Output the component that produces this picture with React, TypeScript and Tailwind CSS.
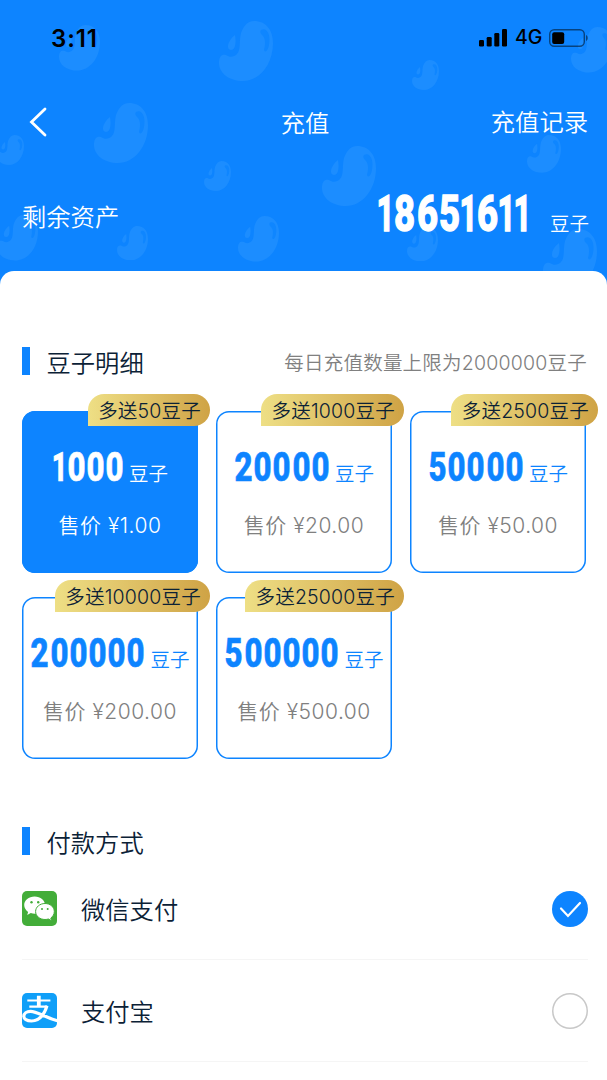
import { useState } from "react";
import clsx from "clsx";

type Pack = {
  id: number;
  amount: string;
  bonus: string;
  price: string;
};

const packs: Pack[] = [
  { id: 1, amount: "1000", bonus: "多送50豆子", price: "1.00" },
  { id: 2, amount: "20000", bonus: "多送1000豆子", price: "20.00" },
  { id: 3, amount: "50000", bonus: "多送2500豆子", price: "50.00" },
  { id: 4, amount: "200000", bonus: "多送10000豆子", price: "200.00" },
  { id: 5, amount: "500000", bonus: "多送25000豆子", price: "500.00" },
];

// x, y, width of every bean scattered over the header
const beans = [
  [59, 25, 41],
  [219, 21, 54],
  [94, 103, 54],
  [-3, 135, 27],
  [204, 161, 27],
  [412, 60, 27],
  [571, 27, 41],
  [322, 146, 54],
  [527, 135, 34],
  [-3, 215, 41],
  [117, 226, 31],
  [238, 216, 41],
  [407, 227, 31],
  [543, 229, 54],
];

const Bean = ({ x, y, w }: { x: number; y: number; w: number }) => (
  <svg
    className="absolute"
    style={{ left: x, top: y, width: w, height: (w * 60) / 54 }}
    viewBox="0 0 54 60"
  >
    <path
      fill="#1c8dff"
      d="M35 0C47 0 54 9 54 22C54 44 40 60 24 60C10 60 0 52 0 42C0 35 3 33 7 34C11 37 15 36 18 33C22 29 20 20 22 12C25 4 29 0 35 0Z"
    />
    <path fill="#1c8dff" d="M16 14C17 20 17 29 12 29C7 29 8 20 16 14Z" />
    <path fill="#0f86ff" d="M42 9C48 6 52 14 50 24C49 30 46 32 45 29C47 22 46 16 43 14C41 12 41 10 42 9Z" />
  </svg>
);

const StatusBar = () => (
  <div className="flex h-[76px] items-center justify-between pl-[51px] pr-[18px] text-black">
    <span className="mt-0.5 text-[24px] font-semibold leading-none tracking-[0.9px]">3:11</span>
    <div className="flex items-center">
      <svg className="h-[18px] w-[28px]" viewBox="0 0 28 18">
        <rect x="0" y="11" width="5" height="6.5" rx="1.3" />
        <rect x="7.7" y="8" width="5" height="9.5" rx="1.3" />
        <rect x="15.3" y="4" width="5" height="13.5" rx="1.3" />
        <rect x="23" y="0" width="5" height="17.5" rx="1.3" />
      </svg>
      <span className="ml-[8px] w-[27px] text-[19.5px] font-[450] leading-none">4G</span>
      <svg className="ml-[7px] h-[18px] w-[40px]" viewBox="0 0 40 18">
        <rect x="0.7" y="0.7" width="34.6" height="16.6" rx="4.5" fill="none" stroke="#000" strokeOpacity="0.5" strokeWidth="1.4" />
        <rect x="3.2" y="3.2" width="12" height="11.8" rx="2" />
        <path d="M37 6C39.3 7 39.3 11 37 12Z" opacity="0.5" />
      </svg>
    </div>
  </div>
);

const SectionTitle = ({ children }: { children: string }) => (
  <div className="flex h-7 items-center">
    <span className="h-7 w-2 bg-[#0d84ff]" />
    <h2 className="ml-[16.5px] pt-[3px] text-[24.3px] font-[350] leading-7 text-[#0b2136]">{children}</h2>
  </div>
);

// narrow bold digits, each squeezed into its own cell
const Condensed = ({ text, size }: { text: string; size: "card" | "total" }) => (
  <span className="flex items-baseline font-['Roboto'] font-extrabold leading-none">
    {text.split("").map((digit, i) => (
      <span
        key={i}
        className={clsx(
          "flex justify-center",
          size === "card" ? "text-[40px] [-webkit-text-stroke:0.7px_currentColor]" : "text-[50px] [-webkit-text-stroke:1.3px_currentColor]",
          size === "card" && (digit === "1" ? "w-[14.5px]" : "w-[19.2px]"),
          size === "total" && (digit === "1" ? "w-[16.2px]" : "w-[22.2px]")
        )}
      >
        <span
          className={clsx(
            "inline-block",
            digit !== "1" && (size === "card" ? "scale-x-[0.78]" : "scale-x-[0.73]"),
            digit === "1" && (size === "card" ? "scale-x-[0.68]" : "scale-x-[0.62]")
          )}
        >
          {digit}
        </span>
      </span>
    ))}
  </span>
);

const PackCard = ({ pack, active, onClick }: { pack: Pack; active: boolean; onClick: () => void }) => (
  <button
    onClick={onClick}
    className={clsx(
      "relative flex h-[162px] w-[176px] flex-col items-center rounded-[13px] shadow-[inset_0_0_0_1.5px_#0d84ff]",
      active ? "bg-[#0d84ff] text-white" : "bg-white text-[#0d84ff]"
    )}
  >
    <span className="absolute -right-[11.5px] -top-[17px] flex h-[32px] items-center whitespace-nowrap rounded-[16px] rounded-bl-none bg-linear-to-r from-[#eedf85] to-[#cfa345] pl-[10.5px] pr-[8.5px] pt-[3px] text-[19.5px] font-[350] tracking-[0.2px] text-[#0b2136]">
      {pack.bonus}
    </span>
    <span className="mt-[37px] flex h-[42px] items-baseline justify-center">
      <Condensed text={pack.amount} size="card" />
      <span className="ml-[5px] text-[19.5px] font-[350] leading-none">豆子</span>
    </span>
    <span
      className={clsx(
        "mt-[23px] whitespace-nowrap text-[21px] font-[350] leading-[26px] tracking-[0.5px]",
        active ? "text-white" : "text-[#808080]"
      )}
    >
      售价 ¥{pack.price}
    </span>
  </button>
);

const WechatIcon = () => (
  <svg className="size-[35px]" viewBox="0 0 35 35">
    <rect width="35" height="35" rx="5" fill="#43ad39" />
    <path
      fill="#fff"
      d="M12.6 5.5C6.7 5.5 2.2 9.3 2.2 14.1C2.2 16.9 3.7 19.3 6.1 20.9L5.2 24L8.8 22.1C10 22.5 11.4 22.7 12.6 22.7C18.5 22.7 23 18.9 23 14.1C23 9.3 18.5 5.5 12.6 5.5Z"
    />
    <path
      fill="#fff"
      stroke="#43ad39"
      strokeWidth="1"
      d="M23 12.5C17.8 12.5 13.6 16 13.6 20.5C13.6 25 17.8 28.5 23 28.5C24.2 28.5 25.4 28.3 26.4 28L29.7 29.8L28.8 27C31 25.5 32.3 23.1 32.3 20.5C32.3 16 28.2 12.5 23 12.5Z"
    />
    <g fill="#43ad39">
      <circle cx="9.5" cy="11.2" r="1.2" />
      <circle cx="16.2" cy="11.2" r="1.2" />
      <circle cx="20" cy="18" r="1" />
      <circle cx="25.7" cy="18" r="1" />
    </g>
  </svg>
);

const AlipayIcon = () => (
  <svg className="size-[35px]" viewBox="0 0 35 35">
    <clipPath id="alipay">
      <rect width="35" height="35" rx="5" />
    </clipPath>
    <g clipPath="url(#alipay)" fill="none" stroke="#fff">
      <rect width="35" height="35" fill="#109ff8" stroke="none" />
      <path strokeWidth="3.8" d="M16.8 2.7V13" />
      <path strokeWidth="2" d="M5.3 7.6H28.4" />
      <path strokeWidth="2.2" d="M7.3 13.6H25.2" />
      <path strokeWidth="3.2" d="M25 12.7C23 19.2 18.5 27.8 9.5 28C4.7 28 1.8 26.2 1.8 23.3C1.8 20.3 4.7 18.3 8.5 18.3C15.5 18.3 21.5 23.8 36 28" />
    </g>
  </svg>
);

const Radio = ({ checked }: { checked: boolean }) =>
  checked ? (
    <svg className="size-9" viewBox="0 0 36 36">
      <circle cx="18" cy="18" r="18" fill="#0d84ff" />
      <path d="M9 17.5L16 25L28 12" fill="none" stroke="#fff" strokeWidth="2.2" strokeLinecap="round" />
    </svg>
  ) : (
    <span className="size-9 rounded-full shadow-[inset_0_0_0_1.5px_#c8c8c8]" />
  );

export default function App() {
  const [selected, setSelected] = useState(1);
  const [method, setMethod] = useState("wechat");

  const methods = [
    { key: "wechat", label: "微信支付", icon: <WechatIcon /> },
    { key: "alipay", label: "支付宝", icon: <AlipayIcon /> },
  ];

  return (
    <div className="h-[1080px] w-[607px] overflow-hidden bg-[#0d84ff] font-['Inter','Noto_Sans_CJK_SC',sans-serif]">
      <header className="relative h-[271px] overflow-hidden text-white">
        {beans.map(([x, y, w]) => (
          <Bean key={`${x}-${y}`} x={x} y={y} w={w} />
        ))}
        <div className="relative">
          <StatusBar />
          <nav className="grid h-[92px] grid-cols-[1fr_120px_1fr] items-center pl-[22px] pr-[19px]">
            <svg className="ml-[7px] h-[30px] w-[18px]" viewBox="0 0 18 30">
              <path d="M16 2L2.5 15L16 28" fill="none" stroke="#fff" strokeWidth="2.8" strokeLinecap="round" />
            </svg>
            <h1 className="pt-px text-center text-[24.3px] font-[350] leading-7">充值</h1>
            <a className="text-right text-[24.3px] font-[350] leading-7">充值记录</a>
          </nav>
          <div className="flex h-[92px] items-center justify-between pl-[22px] pr-[18px]">
            <span className="pt-[6px] text-[24.3px] font-[350]">剩余资产</span>
            <div className="flex items-baseline">
              <Condensed text="18651611" size="total" />
              <span className="ml-[19px] text-[19.5px] font-[350]">豆子</span>
            </div>
          </div>
        </div>
      </header>

      <main className="h-[809px] rounded-t-[14px] bg-white px-[22px] pt-[76px]">
        <div className="-mr-[3px] flex h-7 items-center justify-between pr-px">
          <SectionTitle>豆子明细</SectionTitle>
          <span className="pt-[3px] text-[19.5px] font-[350] leading-7 tracking-[0.22px] text-[#808080]">每日充值数量上限为2000000豆子</span>
        </div>

        <div className="mt-[36px] grid grid-cols-[176px_176px_176px] gap-x-[18px] gap-y-6">
          {packs.map((pack) => (
            <PackCard key={pack.id} pack={pack} active={selected === pack.id} onClick={() => setSelected(pack.id)} />
          ))}
        </div>

        <div className="mt-[68px]">
          <SectionTitle>付款方式</SectionTitle>
        </div>
        <ul className="pt-[3px]">
          {methods.map((m) => (
            <li
              key={m.key}
              onClick={() => setMethod(m.key)}
              className="-mr-[3px] flex h-[102px] items-center border-b-[1.5px] border-[#f5f5f5]"
            >
              {m.icon}
              <span className="ml-6 flex-1 pt-[3px] text-[24.3px] font-[350] text-[#0b2136]">{m.label}</span>
              <Radio checked={method === m.key} />
            </li>
          ))}
        </ul>
      </main>
    </div>
  );
}
